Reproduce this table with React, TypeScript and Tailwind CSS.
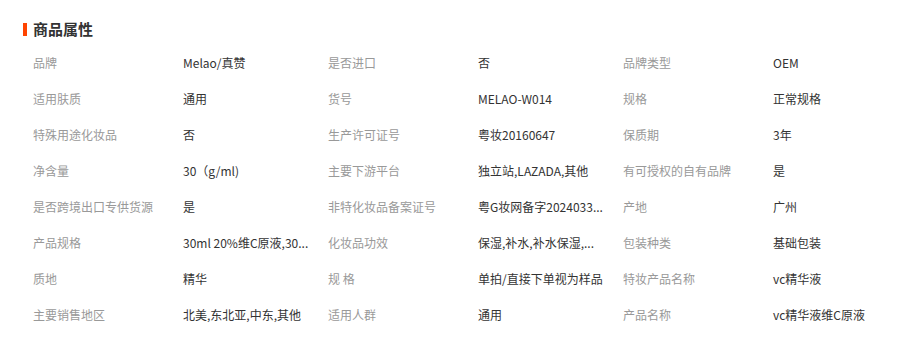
import React from "react";

const rows: [string, string][][] = [
  [["品牌", "Melao/真赞"], ["是否进口", "否"], ["品牌类型", "OEM"]],
  [["适用肤质", "通用"], ["货号", "MELAO-W014"], ["规格", "正常规格"]],
  [["特殊用途化妆品", "否"], ["生产许可证号", "粤妆20160647"], ["保质期", "3年"]],
  [["净含量", "30（g/ml)"], ["主要下游平台", "独立站,LAZADA,其他"], ["有可授权的自有品牌", "是"]],
  [["是否跨境出口专供货源", "是"], ["非特化妆品备案证号", "粤G妆网备字2024033..."], ["产地", "广州"]],
  [["产品规格", "30ml 20%维C原液,30..."], ["化妆品功效", "保湿,补水,补水保湿,..."], ["包装种类", "基础包装"]],
  [["质地", "精华"], ["规 格", "单拍/直接下单视为样品"], ["特妆产品名称", "vc精华液"]],
  [["主要销售地区", "北美,东北亚,中东,其他"], ["适用人群", "通用"], ["产品名称", "vc精华液维C原液"]],
];

export default function App() {
  return (
    <div
      className="w-[924px] h-[340px] bg-white overflow-hidden"
      style={{ fontFamily: '"Noto Sans CJK SC", "Noto Sans", sans-serif' }}
    >
      <div className="flex items-center pl-[23px] pt-[19px] h-[39px]">
        <div className="w-[4px] h-[13px] bg-[#ff4400]" />
        <div className="ml-[6px] text-[15px] leading-[20px] font-bold text-[#333333]">商品属性</div>
      </div>
      <div className="mt-[6px] pl-[33px]">
        {rows.map((r, i) => (
          <div key={i} className="flex h-[36px] items-center">
            {r.map(([k, v], j) => (
              <div key={j} className="flex w-[295px] items-center text-[12px] leading-[16px]">
                <div className="w-[150px] shrink-0 text-[#999999] whitespace-nowrap">{k}</div>
                <div className="w-[130px] shrink-0 text-[#333333] whitespace-nowrap">{v}</div>
              </div>
            ))}
          </div>
        ))}
      </div>
    </div>
  );
}
